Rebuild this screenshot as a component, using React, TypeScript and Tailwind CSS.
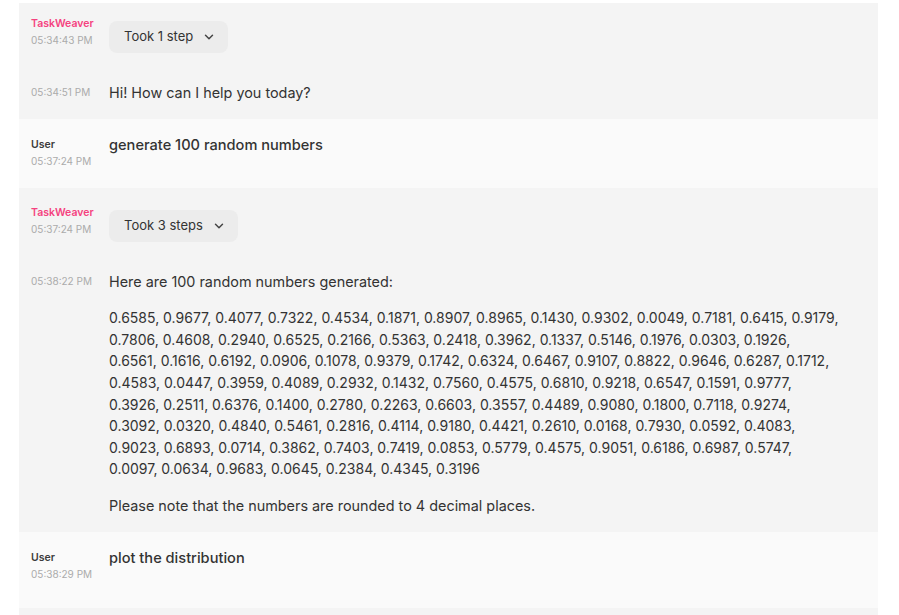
import { ChevronDown } from "lucide-react";

// line breaks as they fall in the original view
const numberLines = [
  "0.6585, 0.9677, 0.4077, 0.7322, 0.4534, 0.1871, 0.8907, 0.8965, 0.1430, 0.9302, 0.0049, 0.7181, 0.6415, 0.9179,",
  "0.7806, 0.4608, 0.2940, 0.6525, 0.2166, 0.5363, 0.2418, 0.3962, 0.1337, 0.5146, 0.1976, 0.0303, 0.1926,",
  "0.6561, 0.1616, 0.6192, 0.0906, 0.1078, 0.9379, 0.1742, 0.6324, 0.6467, 0.9107, 0.8822, 0.9646, 0.6287, 0.1712,",
  "0.4583, 0.0447, 0.3959, 0.4089, 0.2932, 0.1432, 0.7560, 0.4575, 0.6810, 0.9218, 0.6547, 0.1591, 0.9777,",
  "0.3926, 0.2511, 0.6376, 0.1400, 0.2780, 0.2263, 0.6603, 0.3557, 0.4489, 0.9080, 0.1800, 0.7118, 0.9274,",
  "0.3092, 0.0320, 0.4840, 0.5461, 0.2816, 0.4114, 0.9180, 0.4421, 0.2610, 0.0168, 0.7930, 0.0592, 0.4083,",
  "0.9023, 0.6893, 0.0714, 0.3862, 0.7403, 0.7419, 0.0853, 0.5779, 0.4575, 0.9051, 0.6186, 0.6987, 0.5747,",
  "0.0097, 0.0634, 0.9683, 0.0645, 0.2384, 0.4345, 0.3196",
];

function Label({ name, time, user }: { name?: string; time: string; user?: boolean }) {
  return (
    <div className="w-[78px] shrink-0">
      {name && (
        <div
          className={
            "text-[10.5px] leading-[16px] font-semibold " +
            (user ? "text-[#3c3c3c]" : "text-[#f5427f]")
          }
        >
          {name}
        </div>
      )}
      <div className="text-[10px] leading-[16px] text-[#ababab]">{time}</div>
    </div>
  );
}

function Steps({ label }: { label: string }) {
  return (
    <button className="mt-[5px] h-8 flex items-center gap-[9px] rounded-lg bg-[#ececec] pl-[15px] pr-[12px] text-[13px] text-[#333]">
      {label}
      <ChevronDown size={14} strokeWidth={2.5} className="text-[#444]" />
    </button>
  );
}

function TimeRow({ time, children }: { time: string; children: React.ReactNode }) {
  return (
    <div className="flex pl-3 pr-[8px]">
      <div className="w-[78px] shrink-0 text-[10px] leading-[21.6px] text-[#ababab]">{time}</div>
      <div className="flex-1 text-[14.4px] leading-[21.6px] text-[#333]">{children}</div>
    </div>
  );
}

function UserBlock({ time, text, last }: { time: string; text: string; last?: boolean }) {
  return (
    <div className={"bg-[#fafafa] pt-[18px] " + (last ? "pb-[26px]" : "pb-[19px]")}>
      <div className="flex px-3">
        <Label name="User" time={time} user />
        <div className="text-[14.6px] leading-[16px] font-medium text-[#333]">{text}</div>
      </div>
    </div>
  );
}

export default function App() {
  return (
    <div className="min-h-screen bg-white pt-[3px] font-['Inter',sans-serif]">
      <div className="ml-[19px] w-[859px] h-[612px] overflow-hidden">
        <div className="bg-[#f4f4f4] pt-[13px] pb-[15px]">
          <div className="flex px-3">
            <Label name="TaskWeaver" time="05:34:43 PM" />
            <Steps label="Took 1 step" />
          </div>
          <div className="mt-[29px]">
            <TimeRow time="05:34:51 PM">Hi! How can I help you today?</TimeRow>
          </div>
        </div>

        <UserBlock time="05:37:24 PM" text="generate 100 random numbers" />

        <div className="bg-[#f4f4f4] pt-[17px] pb-[15px]">
          <div className="flex px-3">
            <Label name="TaskWeaver" time="05:37:24 PM" />
            <Steps label="Took 3 steps" />
          </div>
          <div className="mt-[29px]">
            <TimeRow time="05:38:22 PM">
              <p>Here are 100 random numbers generated:</p>
              <p className="mt-[15px] text-[14px]">
                {numberLines.map((line, i) => (
                  <span key={i} className="block whitespace-nowrap">
                    {line}
                  </span>
                ))}
              </p>
              <p className="mt-[15px]">Please note that the numbers are rounded to 4 decimal places.</p>
            </TimeRow>
          </div>
        </div>

        <UserBlock time="05:38:29 PM" text="plot the distribution" last />

        <div className="bg-[#f4f4f4] h-10" />
      </div>
    </div>
  );
}
